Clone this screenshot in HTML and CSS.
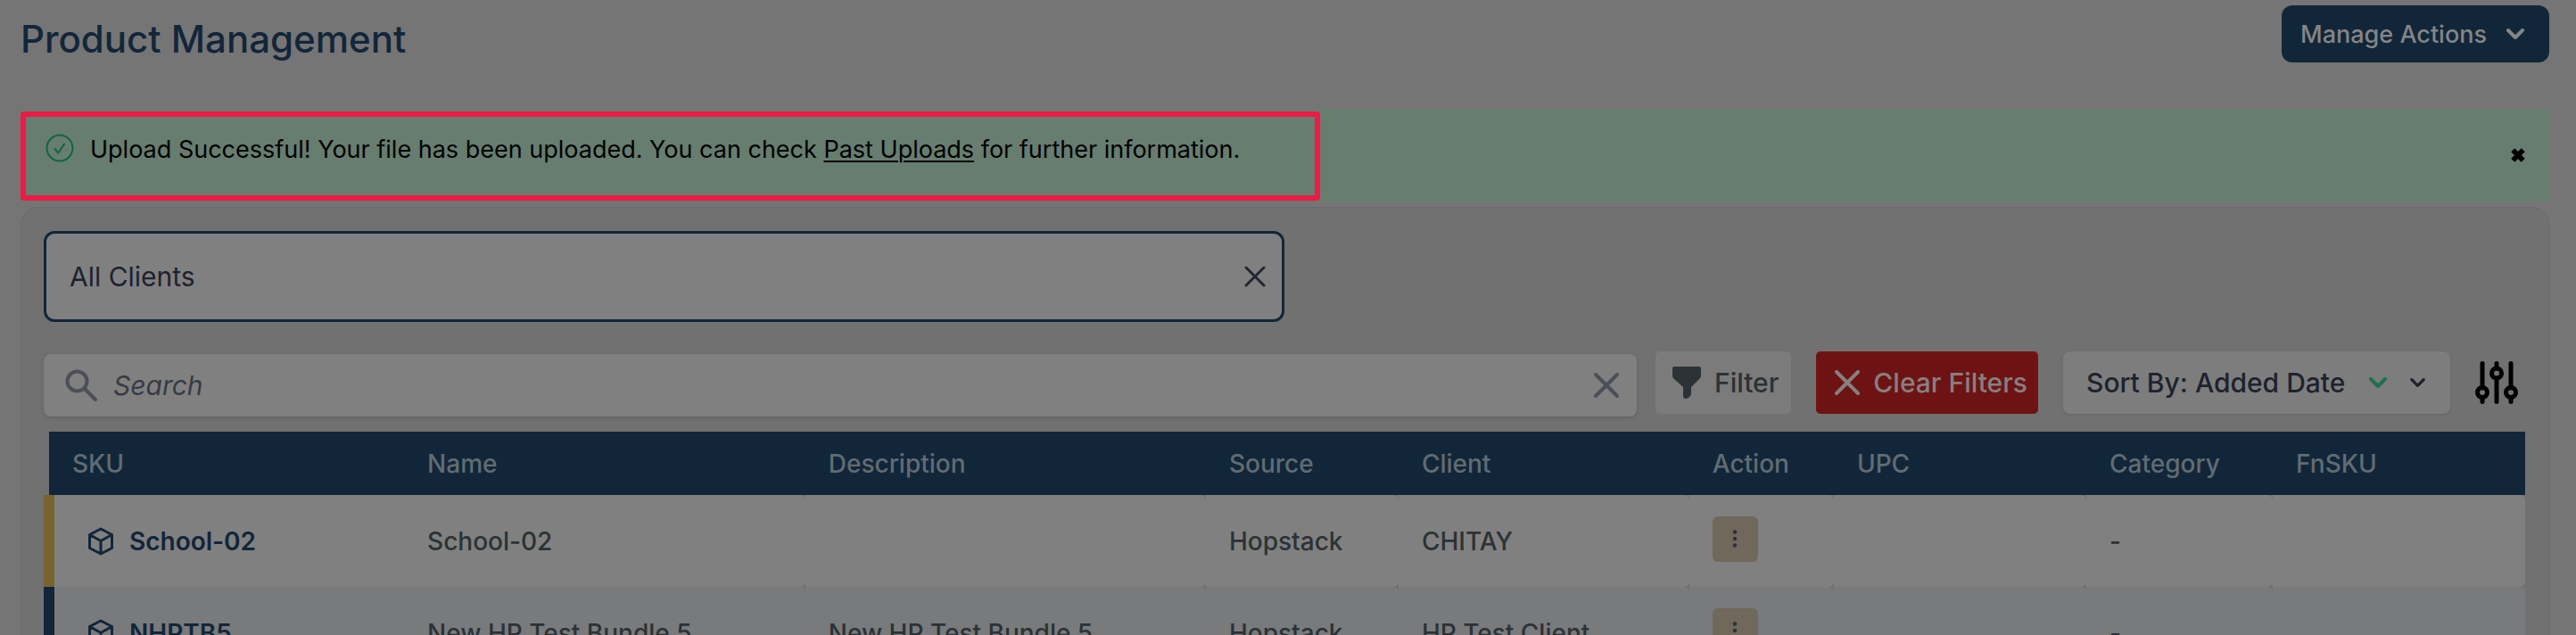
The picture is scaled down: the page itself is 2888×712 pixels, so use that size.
FILE: index.html
```html
<!DOCTYPE html>
<html lang="en">
<head>
<meta charset="utf-8">
<title>Product Management</title>
<link rel="stylesheet" href="styles.css">
</head>
<body>
<main class="page">
  <header class="page-header">
    <h1 class="page-title">Product Management</h1>
    <button class="manage-button" type="button">Manage Actions
      <svg class="icon-chevron" viewBox="0 0 20 12" aria-hidden="true"><path d="M2 2l8 8 8-8"/></svg>
    </button>
  </header>

  <section class="banner" role="status">
    <div class="banner-highlight">
      <svg class="banner-icon" viewBox="0 0 32 32" aria-hidden="true"><circle cx="16" cy="16" r="14.5"/><path d="M10.5 17l3.8 4.5 6.8-10"/></svg>
      <p class="banner-text">Upload Successful! Your file has been uploaded. You can check <a class="banner-link" href="#">Past Uploads</a> for further information.</p>
    </div>
    <button class="banner-close" type="button" aria-label="Dismiss">
      <svg viewBox="0 0 14 14" aria-hidden="true"><path d="M2 2l10 10M12 2l-10 10"/></svg>
    </button>
  </section>

  <section class="panel">
    <div class="client-field">
      <select class="client-select" aria-label="Client"><option>All Clients</option></select>
      <button class="clear-button dark" type="button" aria-label="Clear client">
        <svg class="client-clear-icon" viewBox="0 0 24 24" aria-hidden="true"><path d="M2 2l20 20M22 2L2 22"/></svg>
      </button>
    </div>

    <div class="toolbar">
      <div class="search-field">
        <svg class="search-icon" viewBox="0 0 36 36" aria-hidden="true"><circle cx="13.5" cy="13.5" r="11"/><path d="M22 22l12 12"/></svg>
        <input class="search-input" type="text" placeholder="Search" aria-label="Search">
        <button class="clear-button" type="button" aria-label="Clear search">
          <svg class="search-clear-icon" viewBox="0 0 28 28" aria-hidden="true"><path d="M2 2l24 24M26 2L2 26"/></svg>
        </button>
      </div>
      <button class="tool-button filter-button" type="button">
        <svg class="funnel-icon" viewBox="0 0 32 36" aria-hidden="true"><path d="M2 0h28q2 0 2 2v8q0 2-1.400 3.500L21 23v7q0 2-1.500 3.500l-2 2Q12 37 12 33V23L1.400 13.500Q0 12 0 10V2Q0 0 2 0z"/></svg>
        Filter
      </button>
      <button class="tool-button clear-filters" type="button">
        <svg class="search-clear-icon" viewBox="0 0 28 28" aria-hidden="true"><path d="M2 2l24 24M26 2L2 26"/></svg>
        Clear Filters
      </button>
      <div class="sort-field">
        <select class="sort-select" aria-label="Sort order"><option>Sort By: Added Date</option></select>
        <svg class="icon-chevron green" viewBox="0 0 20 12" aria-hidden="true"><path d="M2 2l8 8 8-8"/></svg>
        <svg class="icon-chevron small" viewBox="0 0 20 12" aria-hidden="true"><path d="M2 2l8 8 8-8"/></svg>
      </div>
      <button class="columns-button" type="button" aria-label="Column settings">
        <svg class="sliders-icon" viewBox="0 0 48 48" aria-hidden="true">
          <path d="M8 2.500V30M8 41v4.500M24 2.500V8M24 19v26.500M40 2.500V30M40 41v4.500"/>
          <circle cx="8" cy="35" r="5.500"/><circle cx="24" cy="13.500" r="5.500"/><circle cx="40" cy="35" r="5.500"/>
        </svg>
      </button>
    </div>

    <table class="products">
      <colgroup>
        <col class="col-sku"><col class="col-name"><col class="col-description"><col class="col-source"><col class="col-client"><col class="col-action"><col class="col-upc"><col class="col-category"><col class="col-fnsku">
      </colgroup>
      <thead>
        <tr><th>SKU</th><th>Name</th><th>Description</th><th>Source</th><th>Client</th><th>Action</th><th>UPC</th><th>Category</th><th>FnSKU</th></tr>
      </thead>
      <tbody>
        <tr class="row-single">
          <td><a class="sku-link" href="#"><svg class="cube-icon" viewBox="0 0 30 32" aria-hidden="true"><path d="M15 2L27.500 8.500V23.500L15 30 2.500 23.500V8.500zM2.500 8.500L15 15.500 27.500 8.500M15 15.500V30"/></svg>School-02</a></td>
          <td>School-02</td><td></td><td>Hopstack</td><td>CHITAY</td>
          <td><button class="row-menu" type="button" aria-label="Actions for School-02"><svg viewBox="0 0 6 20" aria-hidden="true"><circle cx="3" cy="2.500" r="2.200"/><circle cx="3" cy="10" r="2.200"/><circle cx="3" cy="17.500" r="2.200"/></svg></button></td>
          <td></td><td>-</td><td></td>
        </tr>
        <tr class="row-bundle">
          <td><a class="sku-link" href="#"><svg class="cube-icon" viewBox="0 0 30 32" aria-hidden="true"><path d="M15 2L27.500 8.500V23.500L15 30 2.500 23.500V8.500zM2.500 8.500L15 15.500 27.500 8.500M15 15.500V30"/></svg>NHPTB5</a></td>
          <td>New HP Test Bundle 5</td><td>New HP Test Bundle 5</td><td>Hopstack</td><td>HP Test Client</td>
          <td><button class="row-menu" type="button" aria-label="Actions for NHPTB5"><svg viewBox="0 0 6 20" aria-hidden="true"><circle cx="3" cy="2.500" r="2.200"/><circle cx="3" cy="10" r="2.200"/><circle cx="3" cy="17.500" r="2.200"/></svg></button></td>
          <td></td><td>-</td><td></td>
        </tr>
      </tbody>
    </table>
  </section>
</main>
</body>
</html>
```

FILE: styles.css
```css
:root {
  --page: #757575;
  --panel: #717171;
  --surface: #808080;
  --navy: #12263a;
  --ink: #1e222e;
  --muted: #4c4f59;
  --text: #2c3235;
}

* {
  box-sizing: border-box;
}

body {
  margin: 0;
  overflow: hidden;
  background: var(--page);
  color: var(--text);
  font-family: Inter, "Open Sans", sans-serif;
  font-size: 28px;
}

button,
input,
select {
  margin: 0;
  padding: 0;
  border: 0;
  background: none;
  color: inherit;
  font: inherit;
}

select {
  appearance: none;
}

svg {
  display: block;
  flex: none;
  fill: none;
  stroke: currentColor;
  stroke-linecap: round;
  stroke-linejoin: round;
}

.page {
  padding: 6px 30px 0 23px;
}

.page-header {
  display: flex;
  justify-content: space-between;
  align-items: flex-start;
  margin-bottom: 52px;
}

.page-title {
  margin: 0;
  padding-top: 12px;
  color: var(--navy);
  font-size: 42px;
  font-weight: 500;
  line-height: 52px;
}

.manage-button {
  display: flex;
  align-items: center;
  gap: 22px;
  height: 64px;
  padding: 0 28px 0 21px;
  border-radius: 12px;
  background: var(--navy);
  color: #848586;
  font-size: 27px;
  font-weight: 500;
}

.icon-chevron {
  width: 20px;
  height: 12px;
  stroke-width: 4;
}

.icon-chevron.green {
  color: #1f7050;
}

.icon-chevron.small {
  width: 17px;
  height: 10px;
  color: var(--ink);
}

.banner {
  display: flex;
  justify-content: space-between;
  align-items: center;
  height: 104px;
  margin-bottom: 6px;
  padding-right: 27px;
  background: #677d70;
  color: #000;
}

.banner-highlight {
  display: flex;
  align-items: flex-start;
  gap: 18px;
  height: 100px;
  margin-top: 2px;
  padding: 19px 84px 0 22px;
  border: 6px solid #ed1b45;
  border-radius: 4px;
}

.banner-icon {
  width: 32px;
  height: 32px;
  color: #0f6644;
  stroke-width: 2;
}

.banner-text {
  margin: 0;
  font-size: 27px;
  line-height: 36px;
}

.banner-link {
  color: inherit;
  text-decoration-thickness: 2px;
  text-underline-offset: 3px;
}

.banner-close svg {
  width: 16px;
  height: 16px;
  stroke-width: 5;
  stroke-linecap: butt;
}

.panel {
  padding: 26px 26px 26px 25px;
  border: 1px solid #6a6a6e;
  border-radius: 20px 20px 0 0;
  background: var(--panel);
}

.client-field {
  display: flex;
  align-items: center;
  width: 50%;
  height: 102px;
  margin-bottom: 33px;
  padding: 0 18px 0 26px;
  border: 3px solid var(--navy);
  border-radius: 12px;
  background: var(--surface);
}

.client-select {
  flex: 1;
  color: var(--ink);
  font-size: 30px;
}

.clear-button {
  color: var(--muted);
}

.clear-button.dark {
  color: #23272f;
}

.client-clear-icon {
  width: 24px;
  height: 24px;
  stroke-width: 3;
}

.toolbar {
  display: flex;
  align-items: flex-start;
  gap: 28px;
  margin-bottom: 17px;
}

.search-field {
  display: flex;
  flex: 1;
  align-items: center;
  gap: 18px;
  height: 70px;
  margin: 3px -7px 0 0;
  padding: 0 20px 0 24px;
  border-radius: 8px;
  background: var(--surface);
  box-shadow: 0 1px 4px #5f5f63;
}

.search-icon {
  width: 36px;
  height: 36px;
  color: var(--muted);
  stroke-width: 4;
}

.search-input {
  flex: 1;
  min-width: 0;
  font-size: 30px;
  outline: none;
}

.search-input::placeholder {
  color: #383b43;
  font-style: italic;
  opacity: 1;
}

.search-clear-icon {
  width: 28px;
  height: 28px;
  stroke-width: 4;
}

.tool-button {
  display: flex;
  flex: none;
  align-items: center;
  gap: 15px;
  height: 70px;
  border-radius: 5px;
  font-size: 30px;
  font-weight: 500;
}

.filter-button {
  padding: 0 14px 0 19px;
  background: #7b7b7b;
}

.funnel-icon {
  width: 32px;
  height: 36px;
  fill: var(--text);
  stroke: none;
}

.clear-filters {
  padding: 0 12px 0 21px;
  background: #6e1313;
  color: #868080;
}

.sort-field {
  display: flex;
  flex: none;
  align-items: center;
  gap: 26px;
  height: 70px;
  padding: 0 28px 0 26px;
  border-radius: 8px;
  background: #7d7d7d;
  box-shadow: 0 1px 3px #646468;
}

.sort-select {
  color: var(--ink);
  font-size: 30px;
  font-weight: 500;
}

.columns-button {
  height: 70px;
  margin-right: 8px;
  color: #000;
}

.sliders-icon {
  width: 48px;
  height: 48px;
  stroke-width: 5;
}

.products {
  width: 100%;
  border-collapse: collapse;
  table-layout: fixed;
  text-align: left;
  font-size: 28px;
  font-weight: 500;
}

.col-sku { width: 14.340%; }
.col-name { width: 16.200%; }
.col-description { width: 16.180%; }
.col-source { width: 7.780%; }
.col-client { width: 11.740%; }
.col-action { width: 5.840%; }
.col-upc { width: 10.200%; }
.col-category { width: 7.530%; }
.col-fnsku { width: 10.190%; }

.products th {
  height: 71px;
  padding: 0 26px;
  background: var(--navy);
  color: #616c72;
  font-weight: 500;
}

.products td {
  height: 103px;
  padding: 0 26px;
  background: var(--surface);
}

.products td:not(:first-child) {
  border-radius: 0 6px 6px 0;
}

.products .row-bundle td {
  background: #797a7c;
}

.products td:first-child {
  padding-left: 37px;
  border-left: 12px solid #7a6230;
}

.products .row-bundle td:first-child {
  border-left-color: var(--navy);
}

.sku-link {
  display: flex;
  align-items: center;
  gap: 17px;
  color: var(--navy);
  font-weight: 600;
  text-decoration: none;
}

.cube-icon {
  width: 30px;
  height: 32px;
  stroke-width: 3;
}

.row-menu {
  display: flex;
  align-items: center;
  justify-content: center;
  width: 51px;
  height: 51px;
  margin-bottom: 5px;
  border-radius: 6px;
  background: #70685a;
}

.row-menu svg {
  width: 6px;
  height: 20px;
  fill: var(--text);
  stroke: none;
}
```
